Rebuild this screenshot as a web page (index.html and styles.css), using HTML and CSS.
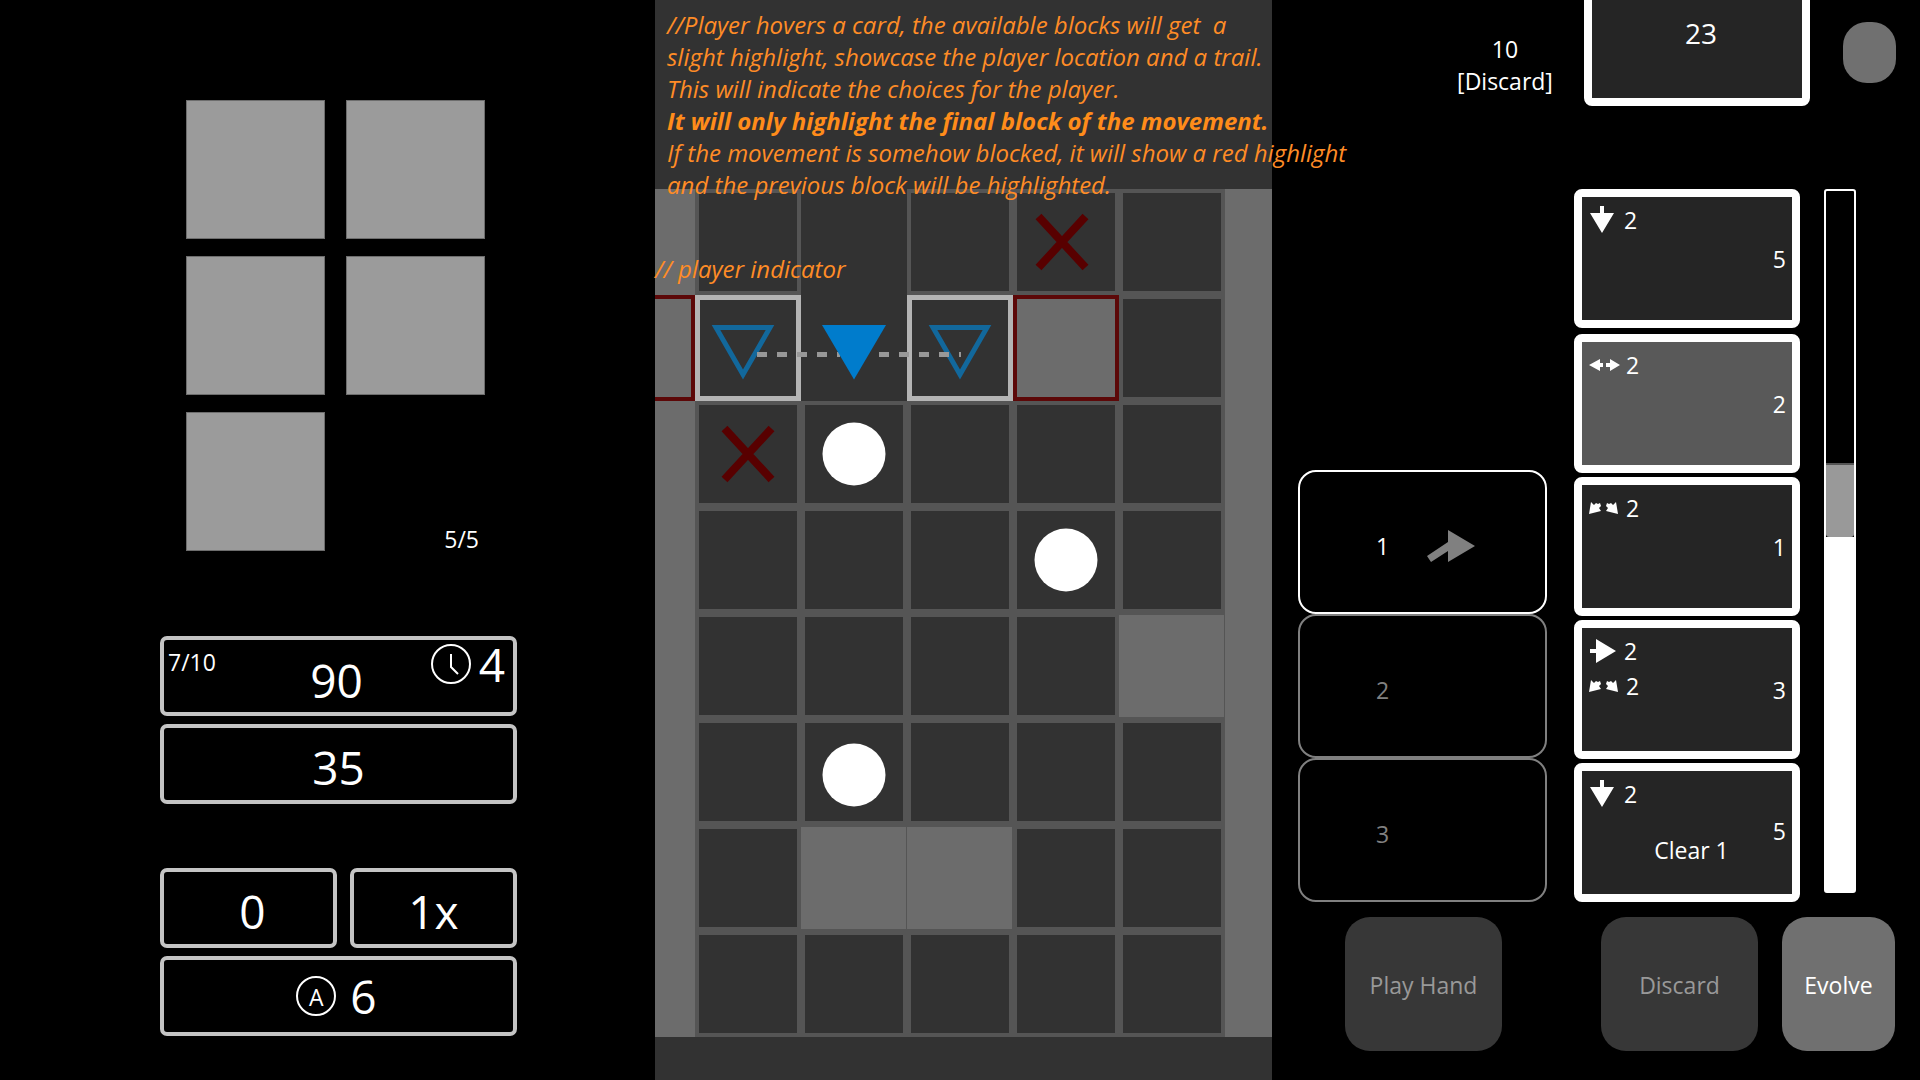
FILE: index.html
```html
<!DOCTYPE html>
<html lang="en">
<head>
<meta charset="utf-8">
<title>Board prototype</title>
<link rel="stylesheet" href="styles.css">
</head>
<body>
<svg class="defs" aria-hidden="true">
  <symbol id="arrow-down" viewBox="0 0 30 30"><path d="M11 1h4v7h10L13 28 1 8h10z"/></symbol>
  <symbol id="arrow-right" viewBox="0 0 30 30"><path d="M1 13h6V3l20 12L7 27V17H1z"/></symbol>
  <symbol id="arrow-sides" viewBox="0 0 32 16"><path d="M0 8 11 2v4h3v4h-3v4zM31 8 21 2v4h-4v4h4v4z"/></symbol>
  <symbol id="arrow-diagonals" viewBox="0 0 32 16"><path d="M0 14 2 2l3 3 2-2 2 1 2-1 1 3-2 2 2 3zM29 14 27 2l-3 3-2-2-2 1-2-1-1 3 2 2-2 3z"/></symbol>
</svg>
<main class="screen">
  <section class="status">
    <div class="relics">
      <div class="relic"></div><div class="relic"></div>
      <div class="relic"></div><div class="relic"></div>
      <div class="relic"></div><p class="relic-count">5/5</p>
    </div>
    <div class="stats">
      <div class="stat stat-goal">
        <span class="stage">7/10</span>
        <span>90</span>
        <span class="turns">
          <svg class="badge" viewBox="0 0 40 40"><circle cx="20" cy="20" r="19"/><path d="M20 10v13l7 7"/></svg>
          <span>4</span>
        </span>
      </div>
      <div class="stat">35</div>
    </div>
    <div class="stats">
      <div class="stat-row">
        <div class="stat stat-score">0</div>
        <div class="stat">1x</div>
      </div>
      <div class="stat stat-actions">
        <span class="badge badge-letter">A</span>
        <span>6</span>
      </div>
    </div>
  </section>

  <section class="field">
    <div class="note">
      <p>//Player hovers a card, the available blocks will get&nbsp; a</p>
      <p>slight highlight, showcase the player location and a trail.</p>
      <p>This will indicate the choices for the player.</p>
      <p><strong>It will only highlight the final block of the movement.</strong></p>
      <p>If the movement is somehow blocked, it will show a red highlight</p>
      <p>and the previous block will be highlighted.</p>
    </div>
    <div class="board">
      <div class="edge"><div class="edge-target"></div></div>
      <div class="cells">
        <div class="cell"></div><div class="cell open"></div><div class="cell"></div><div class="cell"></div><div class="cell"></div>
        <div class="cell target"></div><div class="cell open"></div><div class="cell target"></div><div class="cell blocked"></div><div class="cell"></div>
        <div class="cell"></div><div class="cell"></div><div class="cell"></div><div class="cell"></div><div class="cell"></div>
        <div class="cell"></div><div class="cell"></div><div class="cell"></div><div class="cell"></div><div class="cell"></div>
        <div class="cell"></div><div class="cell"></div><div class="cell"></div><div class="cell"></div><div class="cell wall"></div>
        <div class="cell"></div><div class="cell"></div><div class="cell"></div><div class="cell"></div><div class="cell"></div>
        <div class="cell"></div><div class="cell wall"></div><div class="cell wall"></div><div class="cell"></div><div class="cell"></div>
        <div class="cell"></div><div class="cell"></div><div class="cell"></div><div class="cell"></div><div class="cell"></div>
      </div>
      <div class="edge"></div>
      <svg class="pieces" viewBox="0 0 617 848">
        <g class="ghost"><path d="M61 138.500h54l-27 47z"/><path d="M278 138.500h54l-27 47z" /></g>
        <path class="trail" d="M102 165.500h83M224 165.500h82"/>
        <path class="player" d="M167 136h64l-32 54.500z"/>
        <g class="enemy"><circle cx="199" cy="265" r="31.500"/><circle cx="411" cy="371" r="31.500"/><circle cx="199" cy="586" r="31.500"/></g>
        <g class="mark"><path d="M383.500 27.500 430.500 78.500M430.500 27.500 383.500 78.500"/><path d="M69.500 239.500 116.500 290.500M116.500 239.500 69.500 290.500"/></g>
      </svg>
      <p class="note-player">// player indicator</p>
    </div>
  </section>

  <section class="hand">
    <div class="piles">
      <p class="discard-pile">10<br>[Discard]</p>
      <div class="deck">23</div>
      <button class="settings" type="button" aria-label="Settings"></button>
    </div>
    <div class="play-area">
      <ol class="slots">
        <li class="slot slot-active"><span>1</span>
          <svg class="slot-arrow" viewBox="0 0 50 34"><path d="M22 1 49 17 22 33V22L5 33 1 27 22 13z"/></svg>
        </li>
        <li class="slot"><span>2</span></li>
        <li class="slot"><span>3</span></li>
      </ol>
      <div class="cards">
        <article class="card">
          <div class="moves"><div class="move"><svg class="icon"><use href="#arrow-down"/></svg>2</div></div>
          <span class="value">5</span>
        </article>
        <article class="card card-hover">
          <div class="moves"><div class="move"><svg class="icon icon-wide"><use href="#arrow-sides"/></svg>2</div></div>
          <span class="value">2</span>
        </article>
        <article class="card">
          <div class="moves"><div class="move"><svg class="icon icon-wide"><use href="#arrow-diagonals"/></svg>2</div></div>
          <span class="value">1</span>
        </article>
        <article class="card">
          <div class="moves">
            <div class="move"><svg class="icon"><use href="#arrow-right"/></svg>2</div>
            <div class="move"><svg class="icon icon-wide"><use href="#arrow-diagonals"/></svg>2</div>
          </div>
          <span class="value">3</span>
        </article>
        <article class="card card-effect">
          <div class="moves"><div class="move"><svg class="icon"><use href="#arrow-down"/></svg>2</div></div>
          <span class="value">5</span>
          <span class="effect">Clear 1</span>
        </article>
      </div>
      <div class="meter"><div class="meter-pending"></div><div class="meter-fill"></div></div>
    </div>
    <div class="actions">
      <button class="action" type="button" disabled>Play Hand</button>
      <button class="action action-discard" type="button" disabled>Discard</button>
      <button class="action action-evolve" type="button">Evolve</button>
    </div>
  </section>
</main>
</body>
</html>
```
FILE: styles.css
```css
* { box-sizing: border-box; }

body {
  margin: 0;
  background: #000;
  color: #fff;
  font-family: "Open Sans", "Noto Sans", sans-serif;
  font-size: 23px;
  line-height: 32px;
}

p, ol { margin: 0; padding: 0; }
.defs { display: none; }

.screen {
  display: grid;
  grid-template-columns: 655fr 617fr 648fr;
  min-height: 100vh;
}

/* Left: relics and score */
.status { padding: 100px 138px 0 160px; }

.relics {
  display: grid;
  grid-template-columns: 139px 139px;
  grid-auto-rows: 139px;
  gap: 17px 21px;
  padding-left: 26px;
  margin-bottom: 85px;
}
.relic { background: #9b9b9b; border: 1px solid #6d6d6d; }
.relic-count { place-self: end; padding-right: 6px; line-height: 24px; }

.stats { display: grid; gap: 8px; margin-bottom: 64px; }
.stat-row { display: grid; grid-template-columns: 177fr 167fr; gap: 13px; }
.stat {
  display: flex;
  align-items: center;
  justify-content: center;
  height: 80px;
  padding-top: 6px;
  border: 4px solid #c4c4c4;
  border-radius: 7px;
  font-size: 46px;
  line-height: 60px;
}
.stat-score { padding-left: 8px; }
.stat-goal {
  display: grid;
  grid-template-columns: 1fr auto 1fr;
  align-items: start;
  padding: 10px 8px 0 4px;
}
.stage { font-size: 23px; line-height: 24px; }
.turns { display: flex; justify-content: end; align-items: center; gap: 8px; margin-top: -16px; }
.badge { width: 40px; height: 40px; fill: none; stroke: #fff; stroke-width: 2; }
.stat-actions { gap: 14px; padding: 0 4px 0 0; }
.badge-letter {
  border: 2px solid #fff;
  border-radius: 50%;
  font-size: 23px;
  line-height: 38px;
  text-align: center;
}

/* Middle: board */
.field { background: #323232; min-width: 0; }
.note, .note-player { color: #ff8c26; font-size: 24px; font-style: italic; white-space: nowrap; }
.note { position: relative; z-index: 1; height: 189px; padding: 9px 0 0 12px; }
.note strong { color: #ff8c1a; }

.board {
  position: relative;
  display: grid;
  grid-template-columns: 40fr 530fr 47fr;
}
.cells { display: grid; grid-template-columns: repeat(5, 1fr); background: #555; }
.edge { display: grid; grid-template-rows: 106fr 106fr 636fr; background: #6c6c6c; }
.edge-target { grid-row: 2; border: 4px solid #5c0808; border-left: 0; }
.cell { aspect-ratio: 1; background: #323232; border: 4px solid #555; }
.cell.open { border: 0; }
.cell.target { border: 5px solid #b4b4b4; }
.cell.blocked { background: #6c6c6c; border-color: #5c0808; }
.cell.wall { background: #6c6c6c; border-width: 2px 1px 2px 0; }

.pieces { position: absolute; inset: 0; width: 100%; height: 100%; fill: none; }
.ghost { stroke: #12689c; stroke-width: 5; }
.trail { stroke: #989898; stroke-width: 5; stroke-dasharray: 10 10; }
.player { fill: #007ccc; }
.enemy { fill: #fff; }
.mark { stroke: #580000; stroke-width: 8; }
.note-player { position: absolute; top: 64px; left: 0; }

/* Right: deck, queue and hand */
.piles { display: flex; align-items: start; height: 189px; padding-left: 188px; }
.discard-pile { width: 90px; padding-top: 33px; display: flex; justify-content: center; text-align: center; }
.deck {
  width: 226px;
  height: 139px;
  margin: -33px 33px 0 34px;
  padding: 38px 0 0 8px;
  background: #252525;
  border: 8px solid #fff;
  border-radius: 8px;
  font-size: 28px;
  line-height: 40px;
  text-align: center;
}
.settings { width: 53px; height: 61px; margin-top: 22px; border: 0; border-radius: 24px; background: #707070; }

.play-area { display: flex; align-items: end; gap: 27px; padding-left: 26px; height: 713px; }
.slots { width: 249px; list-style: none; }
.slot {
  display: flex;
  align-items: center;
  gap: 37px;
  height: 144px;
  padding: 8px 0 0 76px;
  border: 2px solid #808080;
  border-radius: 18px;
  color: #808080;
}
.slot-active { border-color: #fff; color: #fff; }
.slot-arrow { width: 50px; height: 34px; fill: #808080; }

.cards { display: grid; gap: 4px; width: 226px; }
.card {
  display: grid;
  grid-template: 1fr auto / auto 1fr;
  height: 139px;
  padding: 0 6px 24px 7px;
  background: #252525;
  border: 8px solid #fff;
  border-radius: 8px;
}
.card-hover { margin-top: 2px; background: #595959; }
.card-effect { padding-bottom: 28px; }
.moves { display: grid; align-content: start; gap: 3px; padding-top: 7px; }
.move { display: flex; align-items: center; gap: 5px; }
.icon { width: 30px; height: 30px; fill: #fff; }
.icon-wide { width: 32px; height: 16px; }
.value { grid-area: 1 / 2 / 3 / 3; align-self: center; justify-self: end; padding-top: 24px; }
.effect { grid-area: 2 / 1 / 3 / 3; justify-self: center; padding-left: 8px; }

.meter {
  display: flex;
  flex-direction: column;
  justify-content: end;
  width: 32px;
  height: 704px;
  margin-left: -3px;
  align-self: start;
  border: 2px solid #fff;
  border-radius: 3px;
}
.meter-pending { height: 74px; background: #999; border-top: 2px solid #555; border-radius: 0 0 3px 3px; }
.meter-fill { height: 354px; background: #fff; }

.actions { display: flex; padding: 15px 0 0 73px; }
.action {
  width: 157px;
  height: 134px;
  padding: 2px 0 0;
  border: 0;
  border-radius: 25px;
  background: #373737;
  color: #999;
  font: inherit;
}
.action-discard { margin: 0 24px 0 99px; }
.action-evolve { width: 113px; background: #707070; color: #fff; }
```
